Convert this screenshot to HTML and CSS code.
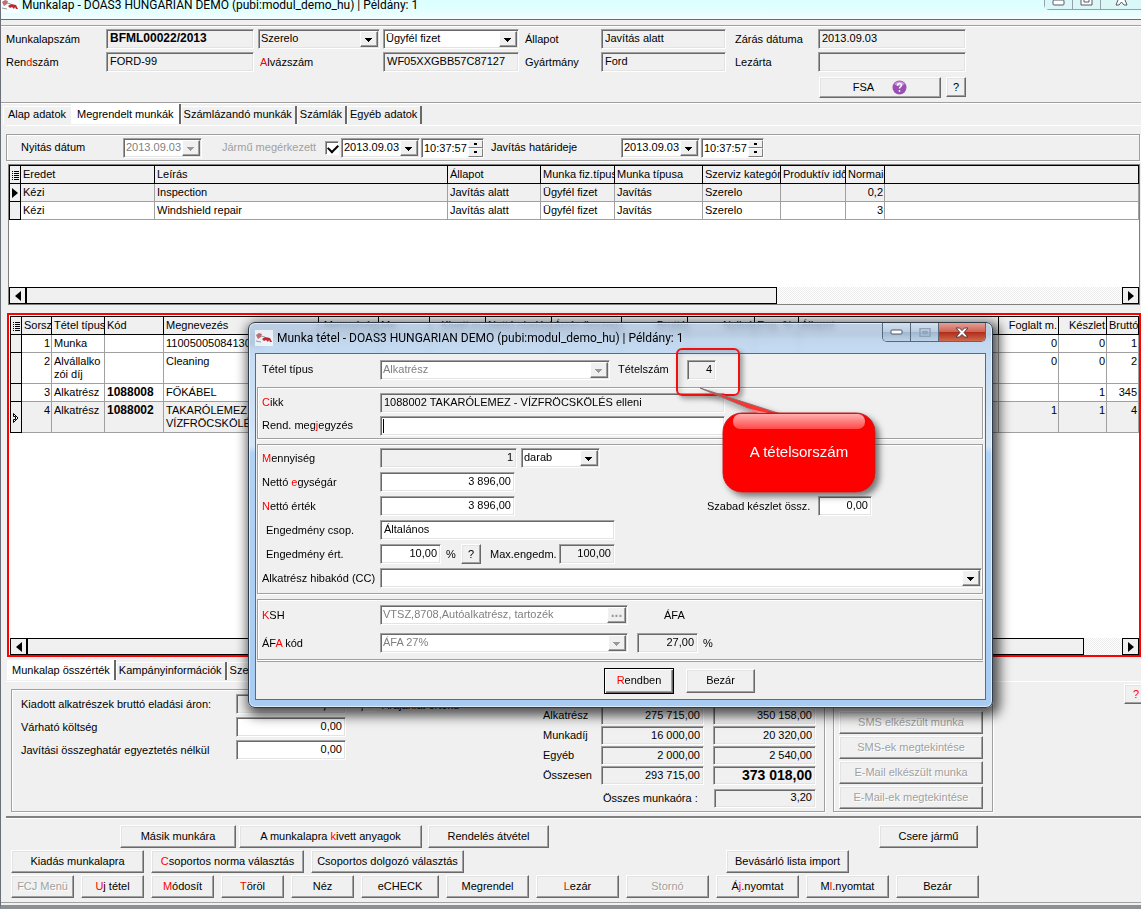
FILE: index.html
```html
<!DOCTYPE html>
<html lang="hu">
<head>
<meta charset="utf-8">
<title>Munkalap</title>
<link rel="stylesheet" href="styles.css">
</head>
<body>
<div class="app">
  <header class="titlebar">
    <svg class="logo" width="18" height="16" viewBox="0 0 18 16"><rect width="18" height="16" fill="#fff" opacity=".7"/><path d="M1 5l3-2 3 1-1 3-3 2z" fill="#b9474f" opacity=".8"/><path d="M7 9l3-2 5 1 2 4h-2l-1-2-1 2-2-2-2 1z" fill="#c0262c"/><path d="M1 11l5 1M6 6l4 1" stroke="#999" stroke-width="1"/></svg>
    <h1 class="title">Munkalap - DOAS3 HUNGARIAN DEMO (pubi:modul_demo_hu) | Példány: 1</h1>
    <div class="winctl">
      <button aria-label="Kis méret"><svg width="13" height="6" viewBox="0 0 13 6"><rect x="1" y="0" width="11" height="5" rx="1" fill="#fff" stroke="#555b66"/></svg></button>
      <button aria-label="Teljes méret"><svg width="13" height="6" viewBox="0 0 13 6"><path d="M1 0v5h11V0M4 0v2h5V0" fill="#fff" stroke="#555b66"/></svg></button>
      <button aria-label="Bezárás" class="wide"><svg width="13" height="6" viewBox="0 0 13 6"><path d="M3 0L1 5h3l2.500-3L9 5h3L10 0" fill="#fff" stroke="#555b66"/></svg></button>
    </div>
  </header>

  <section class="head">
    <div class="head-grid">
      <label for="mlsz">Munkalapszám</label>
      <input id="mlsz" class="in ro b" value="BFML00022/2013" readonly>
      <span class="sel ro"><select aria-label="Szerelo"><option>Szerelo</option></select></span>
      <span class="sel"><select aria-label="Fizetés"><option>Ügyfél fizet</option></select></span>
      <label for="all">Állapot</label>
      <input id="all" class="in ro" value="Javítás alatt" readonly>
      <label for="zar">Zárás dátuma</label>
      <input id="zar" class="in ro" value="2013.09.03" readonly>

      <label for="rsz">Ren<i>d</i>szám</label>
      <input id="rsz" class="in ro" value="FORD-99" readonly>
      <label for="alv" class="in-col"><i>A</i>lvázszám</label>
      <input id="alv" class="in ro" value="WF05XXGBB57C87127" readonly>
      <label for="gym">Gyártmány</label>
      <input id="gym" class="in ro" value="Ford" readonly>
      <label for="lez">Lezárta</label>
      <input id="lez" class="in ro" readonly>
    </div>
    <div class="fsa">
      <button class="btn fsa-btn">FSA <svg width="15" height="15" viewBox="0 0 15 15"><circle cx="7.500" cy="7.500" r="7" fill="#9a4fb5"/><path d="M2 4a7 7 0 0 1 11 0 9 9 0 0 1-11 0z" fill="#c795d8"/><path d="M5.500 5.800c0-3 4-3 4-.5 0 1.500-2 1.500-2 3.200M7.500 10v1.700" stroke="#fff" stroke-width="1.500" fill="none"/></svg></button>
      <button class="btn q">?</button>
    </div>
  </section>

  <nav class="tabs">
    <button class="tab">Alap adatok</button><button class="tab on">Megrendelt munkák</button><button class="tab">Számlázandó munkák</button><button class="tab">Számlák</button><button class="tab">Egyéb adatok</button>
  </nav>

  <main class="page">
    <div class="dates group">
      <label for="ny" class="d1">Nyitás dátum</label>
      <span class="sel off date"><input id="ny" value="2013.09.03" disabled></span>
      <label class="d2" for="jm">Jármű megérkezett</label>
      <input type="checkbox" id="jm" class="chk" checked>
      <span class="sel date"><input aria-label="Érkezés dátuma" value="2013.09.03"></span>
      <span class="spin"><input aria-label="Érkezés ideje" value="10:37:57"><span class="ud"><button aria-label="Fel"></button><button aria-label="Le"></button></span></span>
      <label for="jh" class="d3">Javítás határideje</label>
      <span class="sel date"><input id="jh" value="2013.09.03"></span>
      <span class="spin"><input aria-label="Határidő ideje" value="10:37:57"><span class="ud"><button aria-label="Fel"></button><button aria-label="Le"></button></span></span>
    </div>

    <div class="pane pane1">
      <table class="grid">
        <colgroup><col class="c11"><col class="c134"><col class="c293"><col class="c93"><col class="c74"><col class="c88"><col class="c78"><col class="c65"><col class="c39"><col></colgroup>
        <thead><tr><th class="ind"><svg width="7" height="9" viewBox="0 0 7 9"><path d="M0 .5h1M2 .5h5M0 2.500h1M2 2.500h5M0 4.500h1M2 4.500h5M0 6.500h1M2 6.500h5M0 8.500h1M2 8.500h5" stroke="#000"/></svg></th><th>Eredet</th><th>Leírás</th><th>Állapot</th><th>Munka fiz.típusa</th><th>Munka típusa</th><th>Szerviz kategória</th><th>Produktív idő</th><th>Normaidő</th><th></th></tr></thead>
        <tbody>
          <tr class="cur"><td class="ind"><svg width="6" height="10" viewBox="0 0 6 10"><path d="M0 0l6 5-6 5z"/></svg></td><td>Kézi</td><td>Inspection</td><td>Javítás alatt</td><td>Ügyfél fizet</td><td>Javítás</td><td>Szerelo</td><td></td><td class="n">0,2</td><td></td></tr>
          <tr><td class="ind"></td><td>Kézi</td><td>Windshield repair</td><td>Javítás alatt</td><td>Ügyfél fizet</td><td>Javítás</td><td>Szerelo</td><td></td><td class="n">3</td><td></td></tr>
        </tbody>
      </table>
      <div class="hbar"><button aria-label="Balra"><svg width="6" height="10" viewBox="0 0 6 10"><path d="M6 0L0 5l6 5z"/></svg></button><span class="thumb t1"></span><button class="r" aria-label="Jobbra"><svg width="6" height="10" viewBox="0 0 6 10"><path d="M0 0l6 5-6 5z"/></svg></button></div>
    </div>

    <div class="pane pane2">
      <table class="grid">
        <colgroup><col class="c11"><col class="c30"><col class="c53"><col class="c59"><col class="c155"><col class="c60"><col class="c51"><col class="c56"><col class="c66"><col class="c70"><col class="c66"><col class="c67"><col class="c44"><col><col class="c60"><col class="c48"><col class="c32"></colgroup>
        <thead><tr><th class="ind"><svg width="7" height="9" viewBox="0 0 7 9"><path d="M0 .5h1M2 .5h5M0 2.500h1M2 2.500h5M0 4.500h1M2 4.500h5M0 6.500h1M2 6.500h5M0 8.500h1M2 8.500h5" stroke="#000"/></svg></th><th>Sorszám</th><th>Tétel típusa</th><th>Kód</th><th>Megnevezés</th><th class="n">Mennyiség</th><th>Me.</th><th class="n">Kivett m.</th><th>Nettó eladási</th><th>Árrés összeg</th><th class="n">Bruttó</th><th class="n">Nyilvá</th><th>Eng. %</th><th>Állapot</th><th class="n">Foglalt m.</th><th class="n">Készlet</th><th>Bruttó</th></tr></thead>
        <tbody>
          <tr><td class="ind"></td><td class="n">1</td><td>Munka</td><td></td><td>1100500508413000</td><td></td><td></td><td></td><td></td><td></td><td></td><td></td><td></td><td></td><td class="n">0</td><td class="n">0</td><td class="n">1</td></tr>
          <tr class="two"><td class="ind"></td><td class="n">2</td><td>Alvállalko<br>zói díj</td><td></td><td>Cleaning</td><td></td><td></td><td></td><td></td><td></td><td></td><td></td><td></td><td></td><td class="n">0</td><td class="n">0</td><td class="n">2</td></tr>
          <tr><td class="ind"></td><td class="n">3</td><td>Alkatrész</td><td><b>1088008</b></td><td>FŐKÁBEL</td><td></td><td></td><td></td><td></td><td></td><td></td><td></td><td></td><td></td><td></td><td class="n">1</td><td class="n">345</td></tr>
          <tr class="cur two"><td class="ind"><svg width="6" height="10" viewBox="0 0 6 10"><path d="M.5.500L5 5 .5 9.500v-3h2v-3h-2z" fill="#fff" stroke="#000"/></svg></td><td class="n">4</td><td>Alkatrész</td><td><b>1088002</b></td><td>TAKARÓLEMEZ -<br>VÍZFRÖCSKÖLÉS</td><td></td><td></td><td></td><td></td><td></td><td></td><td></td><td></td><td></td><td class="n">1</td><td class="n">1</td><td class="n">4</td></tr>
        </tbody>
      </table>
      <div class="hbar"><button aria-label="Balra"><svg width="6" height="10" viewBox="0 0 6 10"><path d="M6 0L0 5l6 5z"/></svg></button><span class="thumb t2"></span><button class="r" aria-label="Jobbra"><svg width="6" height="10" viewBox="0 0 6 10"><path d="M0 0l6 5-6 5z"/></svg></button></div>
    </div>

    <nav class="tabs low"><button class="tab on">Munkalap összérték</button><button class="tab">Kampányinformációk</button><button class="tab">Szerviz</button></nav>
    <div class="sum">
      <div class="group totals">
        <div class="costs">
          <label for="k1">Kiadott alkatrészek bruttó eladási áron:</label><input id="k1" class="in ro big num" value="345 169,00" readonly>
          <label for="k2">Várható költség</label><input id="k2" class="in num" value="0,00">
          <label for="k3">Javítási összeghatár egyeztetés nélkül</label><input id="k3" class="in num" value="0,00">
        </div>
        <div class="offer"><input type="checkbox" class="chk ro" id="aj"><label for="aj">Árajánlat értékű</label></div>
        <div class="figs">
          <label for="f1">Alkatrész</label><input id="f1" class="in ro num" value="275 715,00" readonly><input aria-label="Alkatrész bruttó" class="in ro num" value="350 158,00" readonly>
          <label for="f2">Munkadíj</label><input id="f2" class="in ro num" value="16 000,00" readonly><input aria-label="Munkadíj bruttó" class="in ro num" value="20 320,00" readonly>
          <label for="f3">Egyéb</label><input id="f3" class="in ro num" value="2 000,00" readonly><input aria-label="Egyéb bruttó" class="in ro num" value="2 540,00" readonly>
          <label for="f4">Összesen</label><input id="f4" class="in ro num" value="293 715,00" readonly><input aria-label="Összesen bruttó" class="in ro num big" value="373 018,00" readonly>
          <label for="f5" class="hours">Összes munkaóra :</label><input id="f5" class="in ro num hoursin" value="3,20" readonly>
        </div>
      </div>
      <div class="group msgs">
        <button class="btn" disabled>SMS elkészült munka</button>
        <button class="btn" disabled>SMS-ek megtekintése</button>
        <button class="btn" disabled>E-Mail elkészült munka</button>
        <button class="btn" disabled>E-Mail-ek megtekintése</button>
      </div>
      <button class="btn help"><i>?</i></button>
    </div>
  </main>

  <footer class="acts">
    <div class="row r1"><button class="btn w116">Másik munkára</button><button class="btn w183">A munkalapra <i>k</i>ivett anyagok</button><button class="btn w121 gap">Rendelés átvétel</button><button class="btn w99 car">Csere jármű</button></div>
    <div class="row"><button class="btn w133">Kiadás munkalapra</button><button class="btn w153"><i>C</i>soportos norma választás</button><button class="btn w153">Csoportos dolgozó választás</button><button class="btn w123 shop">Bevásárló lista import</button></div>
    <div class="row"><button class="btn w63" disabled>FCJ Menü</button><button class="btn w63"><i>U</i>j tétel</button><button class="btn w63"><i>M</i>ódosít</button><button class="btn w63"><i>T</i>öröl</button><button class="btn w63">Néz</button><button class="btn w78">eCHECK</button><button class="btn w83">Megrendel</button><button class="btn w83"><i>L</i>ezár</button><button class="btn w83" disabled>Stornó</button><button class="btn w83">Á<i>j</i>.nyomtat</button><button class="btn w83">M<i>l</i>.nyomtat</button><button class="btn w83">Bezár</button></div>
  </footer>

  <section class="dialog" role="dialog" aria-label="Munka tétel">
    <header class="dlg-title">
      <svg class="logo" width="18" height="16" viewBox="0 0 18 16"><rect width="18" height="16" fill="#fff" opacity=".7"/><path d="M1 5l3-2 3 1-1 3-3 2z" fill="#b9474f" opacity=".8"/><path d="M7 9l3-2 5 1 2 4h-2l-1-2-1 2-2-2-2 1z" fill="#c0262c"/><path d="M1 11l5 1M6 6l4 1" stroke="#999" stroke-width="1"/></svg>
      <h2 class="title">Munka tétel - DOAS3 HUNGARIAN DEMO (pubi:modul_demo_hu) | Példány: 1</h2>
      <div class="dlgctl">
        <button aria-label="Kis méret"><svg width="13" height="7" viewBox="0 0 13 7"><rect x="1" y="1" width="11" height="4" rx="1" fill="#fff" stroke="#4e5666"/></svg></button>
        <button aria-label="Teljes méret"><svg width="12" height="9" viewBox="0 0 12 9"><path d="M1 .5h10v8H1zM4 3.500h4v2H4z" fill="none" stroke="#8fa3b8" stroke-width="1.500"/></svg></button>
        <button aria-label="Bezárás" class="x"><svg width="14" height="11" viewBox="0 0 14 11"><path d="M1 1h3.500L7 3.500 9.500 1H13L9 5.500l4 4.500H9.500L7 7.500 4.500 10H1l4-4.500z" fill="#fff" stroke="#5a3a45"/></svg></button>
      </div>
    </header>
    <div class="client">
      <div class="drow top">
        <label for="t1" class="lb">Tétel típus</label>
        <span class="sel off s230"><select id="t1" disabled><option>Alkatrész</option></select></span>
        <label for="t2" class="tsz">Tételszám</label><input id="t2" class="in ro num s29" value="4" readonly>
      </div>
      <div class="group g1">
        <div class="drow"><label for="c1" class="lb"><i>C</i>ikk</label><input id="c1" class="in ro s345" value="1088002 TAKARÓLEMEZ - VÍZFRÖCSKÖLÉS elleni" readonly></div>
        <div class="drow"><label for="c2" class="lb">Rend. meg<i>j</i>egyzés</label><span class="in s345 caret"><input id="c2"></span></div>
      </div>
      <div class="group g2">
        <div class="drow"><label for="m1" class="lb"><i>M</i>ennyiség</label><input id="m1" class="in ro num s137" value="1" readonly><span class="sel s79 g4"><select aria-label="Egység"><option>darab</option></select></span></div>
        <div class="drow"><label for="m2" class="lb">Nettó <i>e</i>gységár</label><input id="m2" class="in num s135" value="3 896,00"></div>
        <div class="drow"><label for="m3" class="lb"><i>N</i>ettó érték</label><input id="m3" class="in num s135" value="3 896,00"><label for="m4" class="free">Szabad készlet össz.</label><input id="m4" class="in num s54" value="0,00"></div>
        <div class="drow"><label for="m5" class="lb ind2">Engedmény csop.</label><input id="m5" class="in s235" value="Általános"></div>
        <div class="drow"><label for="m6" class="lb ind2">Engedmény ért.</label><input id="m6" class="in num s61" value="10,00"><span class="pct">%</span><button class="btn q">?</button><label for="m7" class="mx">Max.engedm.</label><input id="m7" class="in ro num s56" value="100,00" readonly></div>
        <div class="drow"><label for="m8" class="lb">Alkatrész hibakód (CC)</label><span class="sel fill"><select id="m8"><option></option></select></span></div>
      </div>
      <div class="group g3">
        <div class="drow"><label for="v1" class="lb"><i>K</i>SH</label><span class="sel off dots s248"><input id="v1" value="VTSZ,8708,Autóalkatrész, tartozék" disabled></span><label for="v3" class="vat">ÁFA</label></div>
        <div class="drow"><label for="v2" class="lb">ÁF<i>A</i> kód</label><span class="sel off s248"><select id="v2" disabled><option>ÁFA 27%</option></select></span><input id="v3" class="in ro num s61 g9" value="27,00" readonly><span class="pct">%</span></div>
      </div>
      <div class="dlg-acts"><button class="btn def"><i>R</i>endben</button><button class="btn cls">Bezár</button></div>
    </div>
  </section>

  <div class="mark"></div>
  <div class="callout">
    <svg width="190" height="125" viewBox="0 0 190 125">
      <defs><linearGradient id="sh" x1="0" y1="0" x2="0" y2="1"><stop offset="0" stop-color="#ffb0b0"/><stop offset="1" stop-color="#ff4848"/></linearGradient><filter id="ds" x="-10%" y="-10%" width="130%" height="130%"><feDropShadow dx="4" dy="4" stdDeviation="3" flood-opacity=".5"/></filter></defs>
      <g filter="url(#ds)"><path d="M2 3L64 29H83z" fill="#ff3030" stroke="#8a7070"/><rect x="25" y="28" width="152" height="79" rx="19" fill="#f00" stroke="#c02020"/></g>
      <rect x="35" y="29" width="132" height="15" rx="7" fill="url(#sh)"/><path d="M60 28l-12-5 22 5z" fill="#ff8080"/>
    </svg>
    <p>A tételsorszám</p>
  </div>
</div>
</body>
</html>
```
FILE: styles.css
```css
* { box-sizing: border-box; }
body { margin: 0; background: #f0f0f0; color: #000; font: 11px/13px "Liberation Sans", Arial, sans-serif; }
input, select, button { font: inherit; color: inherit; margin: 0; min-width: 0; }
button { padding: 0; }
i { font-style: normal; color: #f00; }
label { white-space: nowrap; }

.app { position: relative; overflow: hidden; min-height: 100vh; display: flex; flex-direction: column; border-left: 1px solid #6b7078; border-bottom: 4px solid #8a9094; }

/* window caption */
.titlebar { display: flex; height: 20px; border-bottom: 1px solid #6d6d6d; background: linear-gradient(#dcffff, #e2ffff 55%, #f5fcfd); overflow: hidden; }
.titlebar .logo { margin: -3px 3px 0 0; }
.title { margin: 0; font: 12px/16px Roboto, "Open Sans", sans-serif; white-space: nowrap; }
.titlebar .title { margin-top: -3px; }
.winctl { margin-left: auto; display: flex; height: 10px; border: 1px solid #8fa3a8; border-width: 0 0 1px 1px; border-radius: 0 0 0 5px; }
.winctl button { display: flex; justify-content: center; width: 28px; border: 0; border-right: 1px solid #8fa3a8; background: #dcf7f7; }
.winctl .wide { width: 40px; border: 0; }

/* sunken and raised controls */
.in { height: 20px; padding: 0 3px 2px; background: #fff; border: 1px solid; border-color: #a0a0a0 #fff #fff #a0a0a0; border-radius: 0; box-shadow: inset 1px 1px #696969, inset -1px -1px #e3e3e3; outline: 0; }
.in.ro { background: #f0f0f0; }
.num { text-align: right; }
.b { font-weight: bold; font-size: 12px; }
.sel { position: relative; display: flex; height: 20px; background: #fff; border: 1px solid; border-color: #a0a0a0 #fff #fff #a0a0a0; box-shadow: inset 1px 1px #696969, inset -1px -1px #e3e3e3; }
.sel select, .sel input { appearance: none; width: 100%; border: 0; background: none; padding: 0 17px 1px 2px; outline: 0; opacity: 1; }
.sel.ro { background: #f0f0f0; }
.sel::after { content: ""; position: absolute; top: 1px; right: 1px; bottom: 1px; width: 16px; pointer-events: none; border: 1px solid; border-color: #fff #696969 #696969 #fff; box-shadow: inset -1px -1px #a0a0a0; background: linear-gradient(#000, #000) 4px 6px / 7px 1px no-repeat, linear-gradient(#000, #000) 5px 7px / 5px 1px no-repeat, linear-gradient(#000, #000) 6px 8px / 3px 1px no-repeat, linear-gradient(#000, #000) 7px 9px / 1px 1px no-repeat, #f0f0f0; }
.sel.off { color: #808080; }
.sel.off select, .sel.off input { color: #808080; }
.sel.off::after { background: linear-gradient(#999, #999) 4px 6px / 7px 1px no-repeat, linear-gradient(#999, #999) 5px 7px / 5px 1px no-repeat, linear-gradient(#999, #999) 6px 8px / 3px 1px no-repeat, linear-gradient(#999, #999) 7px 9px / 1px 1px no-repeat, #f0f0f0; }
.sel.dots::after { content: "..."; width: 17px; font: bold 14px/8px "Liberation Sans", sans-serif; text-align: center; background: #f0f0f0; color: #999; }
.btn { height: 23px; background: #f0f0f0; border: 1px solid; border-color: #fff #696969 #696969 #fff; border-radius: 0; box-shadow: inset -1px -1px #a0a0a0, inset 1px 1px #e3e3e3; white-space: nowrap; }
.btn:disabled { color: #a0a0a0; text-shadow: 1px 1px #fff; }
.q { width: 20px; height: 20px; }
.chk { appearance: none; width: 14px; height: 14px; background: #fff; border: 1px solid; border-color: #a0a0a0 #fff #fff #a0a0a0; box-shadow: inset 1px 1px #696969; }
.chk.ro { background: #f0f0f0; }
.chk:checked::before { content: ""; display: block; width: 8px; height: 5px; margin: 2px; border: 2px solid #000; border-width: 0 0 2px 2px; transform: rotate(-45deg); }
.group { border: 1px solid #a0a0a0; box-shadow: 1px 1px #fff, inset 1px 1px #fff; }

/* job sheet head */
.head { margin-top: 5px; padding: 3px 5px 5px; height: 78px; border-top: 1px solid #a0a0a0; border-bottom: 1px solid #a0a0a0; box-shadow: inset 0 1px #fff, 0 1px #fff; }
.head-grid { display: grid; grid-template-columns: 100px 152px 125px 142px 76px 134px 83px 148px; grid-auto-rows: 20px; row-gap: 3px; align-items: center; }
.head-grid .in { margin-right: 4px; }
.head-grid .sel { margin-right: 3px; }
.head-grid .sel + .sel, .head-grid .in-col + .in { margin-right: 6px; }
.head-grid label + #all, .head-grid label + #gym { margin-right: 9px; }
.head-grid #zar, .head-grid #lez { margin-right: 0; }
.head-grid .in-col { padding-left: 2px; }
.fsa { display: flex; gap: 5px; margin: 5px 0 0 813px; }
.fsa-btn { width: 122px; height: 21px; display: flex; justify-content: center; align-items: center; gap: 18px; }

/* tab strips */
.tabs { display: flex; height: 22px; padding: 2px 0 1px 2px; align-items: flex-end; }
.tab { height: 18px; padding: 0 3px 2px; border: 0; border-right: 2px solid #696969; background: #f0f0f0; box-shadow: inset 1px 1px #fff; white-space: nowrap; }
.tab.on { height: 20px; padding: 0 5px 0 6px; background: #fff; }
.tabs .tab:first-child:not(.on) { border-right: 0; width: 68px; }

.page { flex: 1; display: flex; flex-direction: column; margin-left: 5px; border-top: 1px solid #fff; border-bottom: 2px solid #808080; box-shadow: 0 1px #fff; }
.dates { display: flex; align-items: center; height: 27px; margin: 8px 1px 0 0; padding-left: 14px; }
.dates > * { flex: none; }
.dates .sel { width: 79px; }
.dates .d1 { width: 102px; }
.dates .d2 { width: 103px; margin-left: 20px; color: #a0a0a0; }
.dates .chk { margin-right: 2px; }
.dates .d3 { width: 130px; margin-left: 7px; }
.spin { display: flex; width: 63px; height: 20px; margin-left: 1px; background: #fff; border: 1px solid; border-color: #a0a0a0 #fff #fff #a0a0a0; box-shadow: inset 1px 1px #696969; padding: 1px 0 0 2px; }
.spin input { width: 42px; border: 0; padding: 0; background: none; flex: 1; }
.ud { display: flex; flex-direction: column; width: 15px; }
.ud button { flex: 1; border: 1px solid; border-color: #fff #808080 #808080 #fff; background: linear-gradient(#000, #000) 50% 50% / 3px 2px no-repeat, #f0f0f0; }

/* data grids */
.pane { display: flex; flex-direction: column; background: #fff; }
.pane1 { margin: 3px 1px 0 2px; height: 141px; border: 1px solid #808080; }
.pane2 { margin: 8px 0 0 1px; flex: 1; border: 2px solid #f00; padding: 1px 0 0 1px; }
.grid { table-layout: fixed; width: 100%; border-collapse: collapse; }
.grid th, .grid td { height: 18px; padding: 2px 1px 2px 2px; overflow: hidden; white-space: nowrap; text-align: left; vertical-align: top; font-weight: normal; border: 1px solid #a0a0a0; }
.grid th { background: #f0f0f0; border: 1px solid #000; }
.grid .ind { padding: 1px 0 0; text-align: center; vertical-align: middle; background: #f0f0f0; border: 1px solid #000; }
.grid .n { text-align: right; }
.grid .two td { height: 31px; }
.grid .cur td { background: #f0f0f0; }
.grid b { font-size: 12px; }
.grid svg { display: block; margin: 0 auto; }
.c11 { width: 11px; } .c30 { width: 30px; } .c32 { width: 32px; } .c39 { width: 39px; } .c44 { width: 44px; }
.c48 { width: 48px; } .c51 { width: 51px; } .c53 { width: 53px; } .c56 { width: 56px; } .c59 { width: 59px; }
.c60 { width: 60px; } .c65 { width: 65px; } .c66 { width: 66px; } .c67 { width: 67px; } .c70 { width: 70px; }
.c74 { width: 74px; } .c78 { width: 78px; } .c88 { width: 88px; } .c93 { width: 93px; } .c134 { width: 134px; }
.c155 { width: 155px; } .c293 { width: 293px; }
.hbar { display: flex; height: 17px; margin-top: auto; background: repeating-conic-gradient(#fff 0 25%, #ececec 0 50%) 0 0 / 2px 2px; }
.hbar button { display: flex; align-items: center; justify-content: center; width: 17px; background: #f0f0f0; border: 1px solid #000; }
.hbar .r { margin-left: auto; }
.thumb { background: #f0f0f0; border: 1px solid #000; }
.t1 { width: 66.5%; } .t2 { width: 93.6%; }

/* totals */
.low { height: 23px; padding: 0 0 1px 1px; margin-top: 1px; }
.low .tab { padding: 0 3px 1px; }
.low .tab.on { padding: 0 4px 0 5px; }
.sum { display: flex; align-items: flex-start; gap: 8px; height: 135px; padding: 7px 0 0 5px; border-top: 1px solid #fff; }
.totals { display: flex; width: 814px; height: 123px; padding-left: 9px; }
.costs { display: grid; grid-template-columns: 215px 110px; grid-auto-rows: 20px; row-gap: 3px; align-items: center; align-content: start; margin-top: 4px; }
.offer { display: flex; gap: 7px; align-items: center; height: 20px; margin: 5px 0 0 15px; }
.figs { display: grid; grid-template-columns: 58px 103px 112px; grid-auto-rows: 19px; row-gap: 1px; align-items: center; align-content: start; margin: 16px 0 0 auto; padding-right: 8px; }
.figs .in { height: 19px; }
.figs .in + .in { margin-left: 9px; width: 103px; }
.big { font-weight: bold; font-size: 14px; }
.figs .hours { grid-column: 1 / 3; padding-left: 60px; margin-top: 5px; }
.figs .hoursin { margin: 5px 0 0 10px; }
.msgs { display: flex; flex-direction: column; gap: 2px; width: 160px; height: 123px; padding: 21px 9px 0 5px; }
.help { width: 24px; height: 20px; margin: -5px -7px 0 auto; }

/* action buttons */
.acts { padding: 7px 10px 4px; border-bottom: 1px solid #a0a0a0; margin-bottom: 2px; display: flex; flex-direction: column; gap: 2px; }
.row { display: flex; gap: 7px; }
.r1 { gap: 3px; padding-left: 109px; }
.gap { margin-left: 3px; }
.car { margin-left: 327px; } .shop { margin-left: 255px; }
.w63 { width: 63px; } .w78 { width: 78px; } .w83 { width: 83px; } .w99 { width: 99px; } .w116 { width: 116px; }
.w121 { width: 121px; } .w123 { width: 123px; } .w133 { width: 133px; } .w153 { width: 153px; } .w183 { width: 183px; }

/* item dialog */
.dialog { position: absolute; left: 247px; top: 322px; width: 745px; border: 1px solid #2f3b4a; border-radius: 7px; padding: 0 6px 7px; box-shadow: inset 0 0 0 1px rgba(255,255,255,.6), 3px 4px 12px 4px rgba(0,0,0,.65); background: linear-gradient(rgba(170,192,218,.75), rgba(186,214,242,.85) 30px, #d6e6f7 32%, #b0d2f5 34%, #a8ccf2); backdrop-filter: blur(3px); }
.dlg-title { display: flex; align-items: center; height: 30px; }
.dlg-title .logo { margin-right: 4px; }
.dlgctl { display: flex; align-self: flex-start; height: 19px; margin-left: auto; border: 1px solid #59677a; border-top: 0; border-radius: 0 0 5px 5px; overflow: hidden; }
.dlgctl button { display: flex; align-items: center; justify-content: center; width: 28px; border: 0; border-right: 1px solid #59677a; background: linear-gradient(#d4e1ef, #b9cce0 50%, #9fb6cf 50%, #bdd3e8); }
.dlgctl .x { width: 46px; border: 0; background: linear-gradient(#e3a197, #d0604f 50%, #ae2a17 50%, #cf6a4c); }
.client { background: #f0f0f0; border: 1px solid #5c6b7c; padding: 0 2px 0 1px; }
.drow { display: flex; align-items: center; height: 24px; padding-left: 4px; }
.lb { width: 118px; flex: none; }
.ind2 { padding-left: 4px; }
.top { height: 33px; padding: 1px 0 3px 5px; }
.tsz { width: 69px; margin-left: 8px; }
.g1 { padding: 3px 0 1px; } .g1 .drow { height: 23px; }
.g2 { margin-top: 5px; padding: 1px 0 3px; }
.g3 { margin-top: 5px; padding: 1px 0 2px; } .g3 .drow { height: 28px; }
.s29 { width: 29px; } .s54 { width: 54px; } .s56 { width: 56px; } .s61 { width: 61px; }
.s79 { width: 79px; } .s135 { width: 135px; } .s137 { width: 137px; } .s230 { width: 230px; } .s235 { width: 235px; }
.s248 { width: 248px; } .s345 { width: 345px; }
.g4 { margin-left: 4px; } .g9 { margin-left: 9px; }
.fill { flex: 1; }
.free { width: 111px; margin-left: 192px; }
.pct { width: 20px; padding-left: 5px; }
.mx { width: 69px; margin-left: 9px; }
.vat { margin-left: 36px; }
.caret { display: flex; padding: 2px; }
.caret input { width: 100%; border: 0; border-left: 1px solid #000; outline: 0; background: none; }
.dlg-acts { display: flex; gap: 12px; height: 38px; align-items: center; margin-top: 1px; border-top: 1px solid #a0a0a0; padding-left: 347px; }
.def { width: 70px; height: 26px; border-color: #000; box-shadow: inset 1px 1px #fff, inset -1px -1px #696969, inset -2px -2px #a0a0a0; }
.cls { width: 69px; height: 24px; }

/* annotation */
.mark { position: absolute; left: 675px; top: 348px; width: 64px; height: 48px; border: 2px solid #f01010; border-radius: 6px; box-shadow: 3px 3px 5px rgba(0,0,0,.35), inset 3px 3px 5px rgba(0,0,0,.15); }
.callout { position: absolute; left: 697px; top: 385px; width: 190px; height: 125px; }
.callout svg { display: block; }
.callout p { position: absolute; left: 25px; top: 58px; width: 152px; margin: 0; text-align: center; color: #fff; font-size: 15px; line-height: 18px; }
```
